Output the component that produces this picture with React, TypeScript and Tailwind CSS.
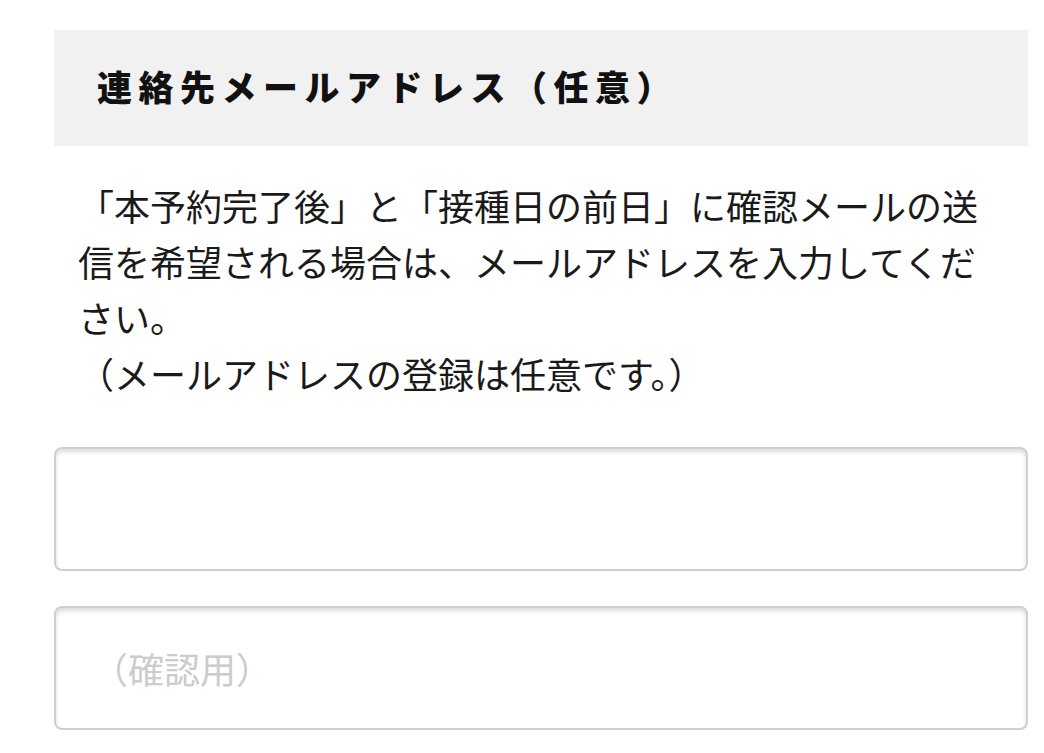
import React from 'react'

const jp = { fontFamily: '"Noto Sans CJK JP", "Noto Sans", sans-serif' }

export default function App() {
  return (
    <div className="min-h-screen bg-white pt-[30px] pl-[54px]" style={jp}>
      <div className="w-[974px]">
        {/* Section header */}
        <div className="h-[116px] bg-[#f1f1f1] flex items-center pl-[43px] pb-[6px]">
          <h2 className="text-[35px] font-black tracking-[6.5px] text-[#111] leading-none">
            連絡先メールアドレス（任意）
          </h2>
        </div>

        {/* Description */}
        <p className="mt-[31px] pl-[24px] w-[950px] text-[36px] leading-[56px] text-[#1a1a1a]">
          「本予約完了後」と「接種日の前日」に確認メールの送信を希望される場合は、メールアドレスを入力してください。
          <br />
          （メールアドレスの登録は任意です。）
        </p>

        {/* Inputs */}
        <div className="mt-[46px] flex flex-col gap-[35px]">
          <input
            type="email"
            className="h-[124px] w-full rounded-lg border-2 border-[#cfcfcf] bg-white px-[36px] text-[36px] shadow-[inset_0_3px_4px_rgba(0,0,0,0.14)] outline-none"
          />
          <input
            type="email"
            placeholder="（確認用）"
            className="h-[124px] w-full rounded-lg border-2 border-[#cfcfcf] bg-white px-[36px] text-[36px] shadow-[inset_0_3px_4px_rgba(0,0,0,0.14)] outline-none placeholder:text-[#cccccc]"
          />
        </div>
      </div>
    </div>
  )
}
